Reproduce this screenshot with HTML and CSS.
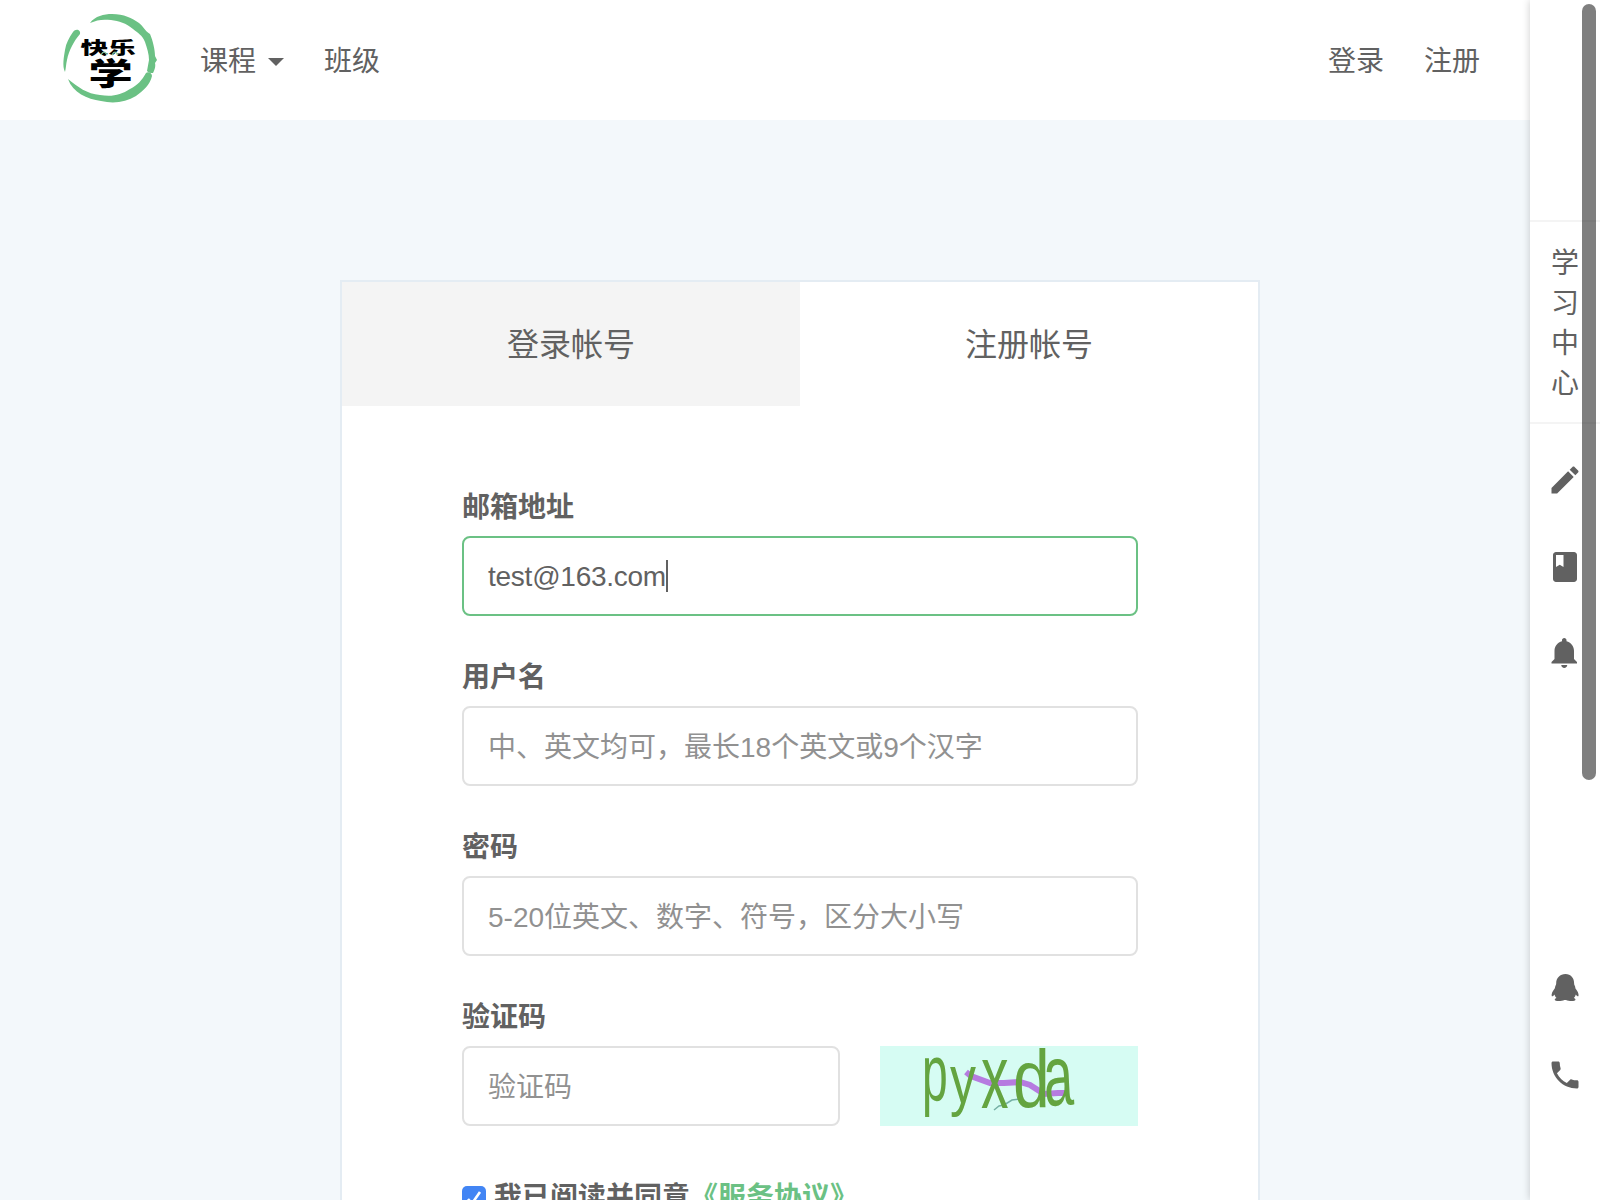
FILE: index.html
```html
<!DOCTYPE html>
<html lang="zh-CN">
<head>
<meta charset="utf-8">
<title>注册</title>
<link rel="stylesheet" href="styles.css">
</head>
<body>
<div class="page">
  <div class="content">
    <header class="navbar">
      <a class="logo" href="#">
        <svg width="98" height="92" viewBox="0 0 98 92">
          <g fill="#6bc184">
            <path d="M30 11C35 4 44 2 52 2c12 0 20 4 27 9 4 3 6 8 11 11 3 7 5 16 5 22l2 4-2 3c1 4-1 8-2 10-3 0-4 0-6-2l2-11c0-6-2-12-4-18-3-7-7-9-12-13C66 11 59 9 51 8c-9-1-14 0-21 3z"/>
            <path d="M13 20c3-4 8-2 7 2C14 29 9 38 7 48c-1 4-1 8-2 12-3-6-1-16 0-22 1-7 4-12 8-18z"/>
            <path d="M8 67c10 8 19 15 32 16 12 2 21 0 30-6 8-4 12-9 16-16 2-2 6 0 6 3-2 9-9 15-16 20-10 6-22 8-35 5C27 87 13 81 8 67z"/>
          </g>
          <g class="logo-text">
            <text transform="translate(20.500 41.500) scale(1.680 1)" font-size="16.500">快乐</text>
            <text transform="translate(28.500 73) scale(1.450 1)" font-size="30.500">学</text>
          </g>
          <path d="M41 43q3-6 6 0M52 43q3-6 6 0" fill="none" stroke="#8fd2a5" stroke-width="1.200"/>
        </svg>
      </a>
      <nav class="nav-main">
        <a class="dropdown" href="#">课程<i class="caret"></i></a>
        <a href="#">班级</a>
      </nav>
      <nav class="nav-user">
        <a href="#">登录</a>
        <a href="#">注册</a>
      </nav>
    </header>

    <main class="card">
      <div class="tabs">
        <a class="tab tab-inactive" href="#">登录帐号</a>
        <a class="tab" href="#">注册帐号</a>
      </div>
      <form class="form">
        <div class="group">
          <label>邮箱地址</label>
          <div class="control focused"><span class="value">test@163.com</span><i class="cursor"></i></div>
        </div>
        <div class="group">
          <label>用户名</label>
          <div class="control"><span class="placeholder">中、英文均可，最长18个英文或9个汉字</span></div>
        </div>
        <div class="group">
          <label>密码</label>
          <div class="control"><span class="placeholder">5-20位英文、数字、符号，区分大小写</span></div>
        </div>
        <div class="group">
          <label>验证码</label>
          <div class="captcha-row">
            <div class="control"><span class="placeholder">验证码</span></div>
            <svg class="captcha" width="258" height="80" viewBox="0 0 258 80">
              <rect width="258" height="80" fill="#d6fcf3"/>
              <path d="M86 26l5 4 19 7 14 0 16-1 10 3 14 9 14-1 10 0" fill="none" stroke="#b67be0" stroke-width="6"/>
              <path d="M114 64l5-4 5-1 8-5 8-1" fill="none" stroke="#75b0a5" stroke-width="1.500"/>
              <g class="captcha-text">
                <text transform="translate(42 54) scale(1.050 1.830)">p</text>
                <text transform="translate(70 57) scale(1.180 1.570)">y</text>
                <text transform="translate(101 62) scale(1.250 2.050)">x</text>
                <text transform="translate(133 61) scale(1.500 1.860)">d</text>
                <text transform="translate(165 60) rotate(-3) scale(1.200 1.950)">a</text>
              </g>
            </svg>
          </div>
        </div>
        <div class="agree">
          <span class="checkbox"><svg width="24" height="24" viewBox="0 0 24 24"><path d="M6 13l4 4.500L18 6" fill="none" stroke="#fff" stroke-width="2.600"/></svg></span>
          <span class="agree-text">我已阅读并同意<a href="#">《服务协议》</a></span>
        </div>
      </form>
    </main>
  </div>

  <aside class="sidebar">
    <div class="center-link">学<br>习<br>中<br>心</div>
    <div class="tools">
      <svg viewBox="0 0 24 24"><path d="M3 17.25V21h3.75L17.81 9.94l-3.75-3.75L3 17.25zM20.71 7.04c.39-.39.39-1.02 0-1.41l-2.34-2.34c-.39-.39-1.02-.39-1.41 0l-1.83 1.83 3.75 3.75 1.83-1.83z"/></svg>
      <svg viewBox="0 0 24 24"><path d="M18 2H6c-1.1 0-2 .9-2 2v16c0 1.1.9 2 2 2h12c1.1 0 2-.9 2-2V4c0-1.100-.9-2-2-2zM6 4h5v8l-2.500-1.500L6 12V4z"/></svg>
      <svg viewBox="0 0 24 24"><path d="M11.500 22c1.100 0 2-.9 2-2h-4c0 1.100.9 2 2 2zM18 16v-5.500c0-3.070-2.130-5.640-5-6.320V3.500c0-.83-.67-1.500-1.500-1.500S10 2.670 10 3.500v.68c-2.870.68-5 3.250-5 6.320V16l-2 2v1h17v-1l-2-2z"/></svg>
    </div>
    <div class="contacts">
      <svg viewBox="0 0 36 36"><path d="M18.500 4c-5.500 0-9.300 4-9.300 9 0 1.500-.3 2-.8 3-.5 1.200-.3 2-.7 2.600-2 2.400-3.500 5.400-3 7.400.3 1 2-.3 2.800-1.500.4 1.500 1 2.500 2 3.500-1 .4-1.800 1-1.800 1.800 0 1.500 6.500 1.700 9.700.2h1.600c3.200 1.500 9.500 1.300 9.500-.2 0-.8-.7-1.400-1.700-1.800 1-1 1.600-2 2-3.500.8 1.200 2.300 2.500 2.700 1.500.5-2-1-5-3-7.400-.3-.8-.1-1.600-.6-2.600-.5-1-.8-1.500-.8-3 0-5-3.300-9-8.600-9z"/></svg>
      <svg viewBox="0 0 24 24"><path d="M6.620 10.790c1.440 2.830 3.760 5.140 6.590 6.590l2.200-2.200c.27-.27.67-.36 1.020-.24 1.120.37 2.330.57 3.570.57.55 0 1 .45 1 1V20c0 .55-.45 1-1 1C10.610 21 3 13.390 3 4c0-.55.45-1 1-1h3.500c.55 0 1 .45 1 1 0 1.250.2 2.450.57 3.570.11.35.03.74-.25 1.020l-2.200 2.200z"/></svg>
    </div>
  </aside>
  <div class="scroll-thumb"></div>
</div>
</body>
</html>
```
FILE: styles.css
```css
* { box-sizing: border-box; }
body {
  margin: 0;
  color: #616161;
  font: 28px/40px "Liberation Sans", "Noto Sans CJK SC", sans-serif;
}
a { color: inherit; text-decoration: none; }
svg { display: block; }

.page {
  position: relative;
  display: flex;
  width: 1600px;
  height: 1200px;
  overflow: hidden;
  background: #f3f8fb;
}
.content { width: 1530px; }

.navbar {
  display: flex;
  align-items: center;
  height: 120px;
  padding: 0 50px 0 60px;
  background: #fff;
}
.logo { margin: -4px 42px 0 0; }
.logo-text {
  fill: #000;
  font-family: "Noto Sans CJK SC", sans-serif;
  font-weight: 900;
}
.nav-main, .nav-user { display: flex; gap: 40px; padding-top: 3px; }
.nav-user { margin-left: auto; }
.dropdown { display: flex; align-items: center; gap: 12px; }
.caret {
  margin-top: 1px;
  border: 8px solid transparent;
  border-top-color: #616161;
  border-bottom: 0;
}

.card {
  width: 920px;
  height: 1100px;
  margin: 160px 0 0 340px;
  border: 2px solid #e4ecf3;
  background: #fff;
}
.tabs { display: flex; }
.tab {
  flex: 1;
  height: 124px;
  font-size: 32px;
  line-height: 127px;
  text-align: center;
}
.tab-inactive { background: #f4f4f4; }

.form {
  display: flex;
  flex-direction: column;
  gap: 40px;
  padding: 80px 120px;
}
.group label {
  display: block;
  height: 40px;
  margin-bottom: 10px;
  font-weight: 700;
  line-height: 43px;
}
.control {
  display: flex;
  align-items: center;
  height: 80px;
  padding: 0 24px;
  border: 2px solid #e1e1e1;
  border-radius: 8px;
  color: #919191;
  white-space: nowrap;
}
.placeholder { padding-top: 3px; }
.focused { border-color: #6bc184; color: #616161; }
.value { padding-top: 2px; letter-spacing: -.25px; }
.cursor { width: 2px; height: 32px; background: #616161; }
.captcha-row { display: flex; gap: 40px; }
.captcha-row .control { flex: 1; }
.captcha { overflow: visible; }
.captcha-text {
  fill: #64a440;
  font: 44px "Liberation Sans", sans-serif;
}
.agree {
  display: flex;
  gap: 8px;
  padding-top: 10px;
  font-weight: 700;
}
.agree-text { line-height: 43px; }
.agree a { color: #6bc184; }
.checkbox {
  width: 24px;
  height: 24px;
  margin-top: 10px;
  border-radius: 5px;
  background: #4285f4;
}

.sidebar {
  display: flex;
  flex-direction: column;
  align-items: center;
  width: 70px;
  padding: 220px 0 107px;
  background: #fff;
  box-shadow: 0 0 8px rgba(0, 0, 0, .2);
}
.sidebar svg { width: 36px; height: 36px; fill: #616161; }
.center-link {
  width: 100%;
  padding: 22px 0 18px;
  border: solid #f4f4f4;
  border-width: 2px 0;
  text-align: center;
}
.tools {
  display: flex;
  flex-direction: column;
  gap: 50.5px;
  padding-top: 38px;
}
.contacts {
  display: flex;
  flex-direction: column;
  gap: 51px;
  margin-top: auto;
}
.scroll-thumb {
  position: absolute;
  top: 4px;
  right: 4px;
  width: 14px;
  height: 776px;
  border-radius: 7px;
  background: rgba(0, 0, 0, .5);
}
```
